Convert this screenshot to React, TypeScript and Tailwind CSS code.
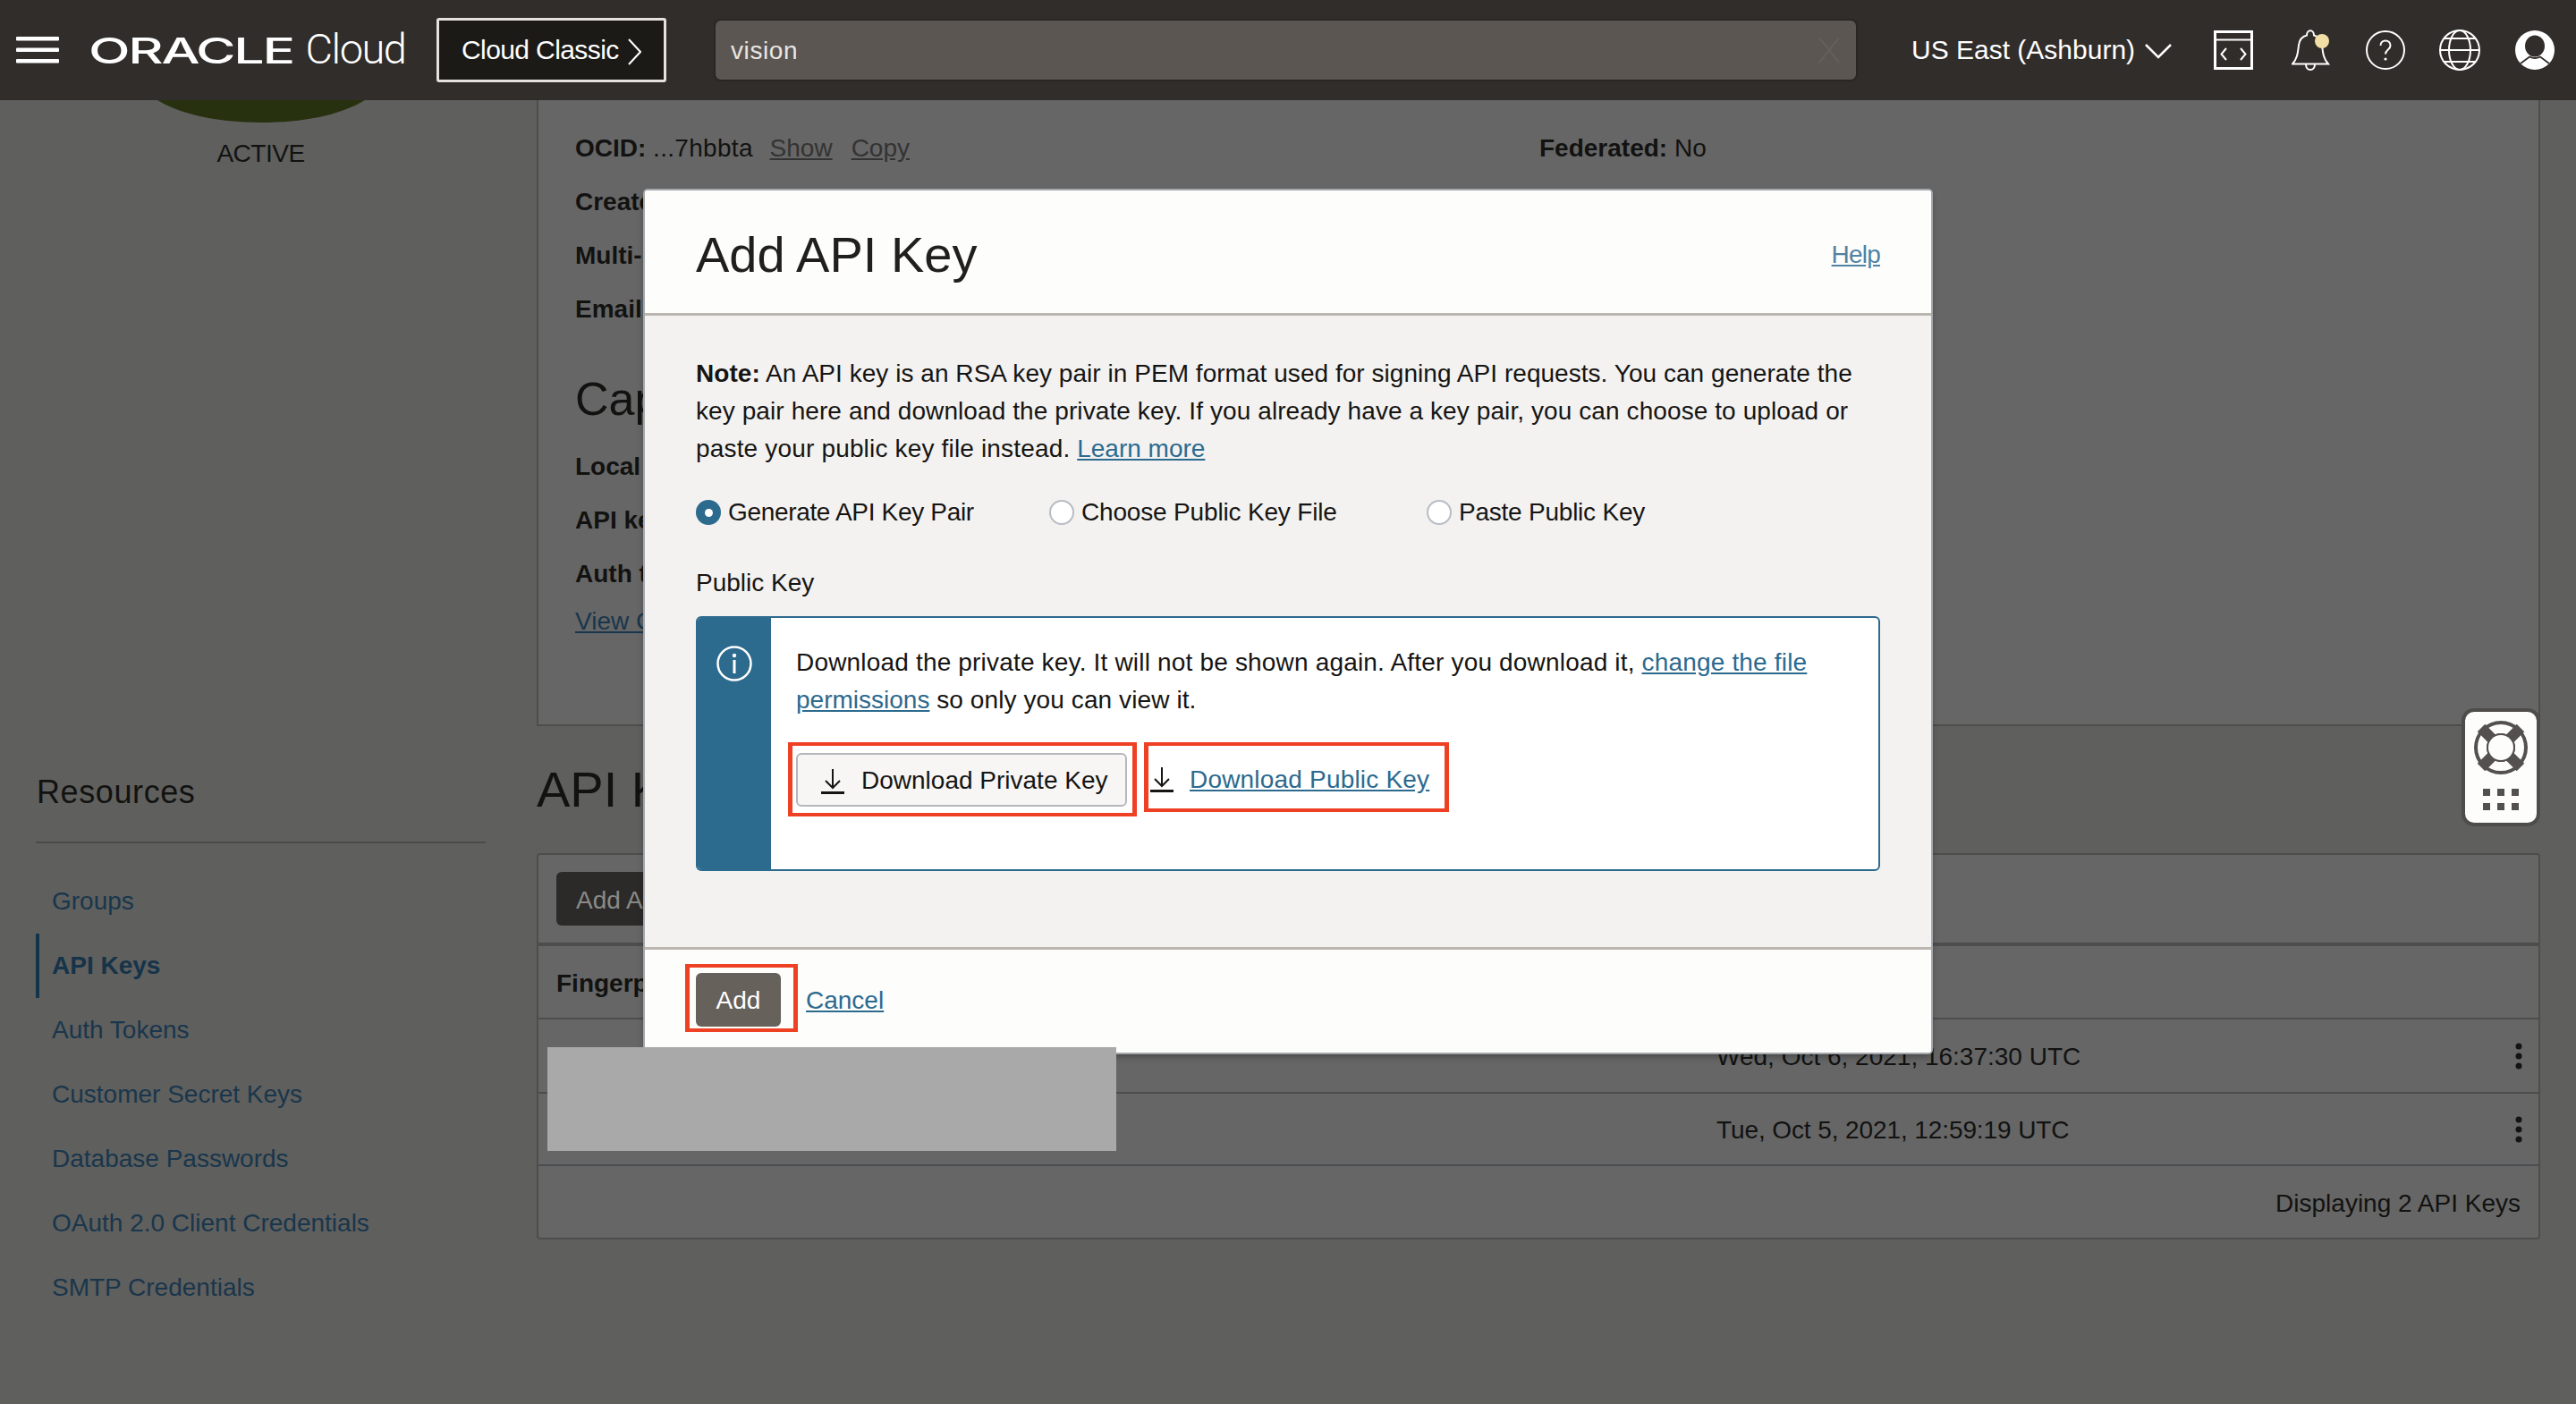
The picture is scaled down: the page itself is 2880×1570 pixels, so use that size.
import React from "react";

const Dl = ({ className = "" }: { className?: string }) => (
  <svg width="26" height="29" viewBox="0 0 26 29" className={className} fill="none" stroke="#161513">
    <path d="M13 1V22M5 14l8 8 8-8" strokeWidth="2" />
    <path d="M0 27.5H26" strokeWidth="3" />
  </svg>
);

const Radio = ({ on = false }: { on?: boolean }) =>
  on ? (
    <span className="flex h-[28px] w-[28px] items-center justify-center rounded-full bg-[#2c6a8e]">
      <span className="h-[9px] w-[9px] rounded-full bg-white" />
    </span>
  ) : (
    <span className="h-[28px] w-[28px] rounded-full border-2 border-[#b8bcc4] bg-white" />
  );

const navItems = ["Groups", "API Keys", "Auth Tokens", "Customer Secret Keys", "Database Passwords", "OAuth 2.0 Client Credentials", "SMTP Credentials"];

const Kebab = () => (
  <svg width="8" height="30" viewBox="0 0 8 30" fill="#141414">
    <circle cx="4" cy="4" r="3.5" />
    <circle cx="4" cy="15" r="3.5" />
    <circle cx="4" cy="26" r="3.5" />
  </svg>
);

export default function App() {
  return (
    <div className="relative h-[1570px] w-[2880px] overflow-hidden bg-[#5f5f5d] font-['Liberation_Sans',Arial,sans-serif] text-[28px] leading-[42px] text-[#121211]">
      {/* Header */}
      <header className="relative z-10 flex h-[112px] items-center bg-[#312d2a] pl-[18px] text-white">
        <svg width="48" height="30" viewBox="0 0 48 30" fill="#fff" className="-mt-[1px]">
          <rect width="48" height="4.5" rx="1" />
          <rect y="12.5" width="48" height="4.5" rx="1" />
          <rect y="25" width="48" height="4.5" rx="1" />
        </svg>
        <div className="ml-[33px] flex w-[353px] items-baseline whitespace-nowrap">
          <span className="origin-left scale-x-[1.52] font-['Inter'] text-[40px] font-medium leading-[50px] tracking-[-1.5px]">ORACLE</span>
          <span className="ml-[92px] font-['Roboto'] text-[47px] font-light leading-[50px] tracking-[-1.5px]">Cloud</span>
        </div>
        <div className="ml-[36px] flex h-[72px] w-[257px] items-center rounded-[3px] border-[3px] border-[#e4e2de] bg-[#1b1a16] pl-[25px] text-[30px] tracking-[-.6px]">
          Cloud Classic
          <svg width="15" height="30" viewBox="0 0 15 30" fill="none" stroke="#fff" strokeWidth="2" className="ml-[10px] mt-[3px]">
            <path d="M1 1l13 14L1 29" />
          </svg>
        </div>
        <div className="ml-[55px] flex h-[66px] w-[1275px] items-center justify-between rounded-[6px] bg-[#5b5652] pl-[17px] pr-[18px] text-[#e9e6e2] shadow-[0_0_0_2px_#292623]">
          <span className="pt-[2px] tracking-[.6px]">vision</span>
          <svg width="24" height="30" viewBox="0 0 24 30" stroke="#64605b" strokeWidth="2">
            <path d="M1 1l22 28M23 1L1 29" />
          </svg>
        </div>
        <span className="ml-[62px] whitespace-nowrap text-[30px]">US East (Ashburn)</span>
        <svg width="30" height="17" viewBox="0 0 30 17" fill="none" stroke="#fff" strokeWidth="2.5" className="ml-[11px] mt-[3px]">
          <path d="M1 1l14 14L29 1" />
        </svg>
        <svg width="44" height="44" viewBox="0 0 44 44" fill="none" stroke="#fff" className="ml-[47px]">
          <path d="M1.5 1.5h41v41h-41z" strokeWidth="3" />
          <path d="M2 10.5h40" strokeWidth="2" />
          <path d="M14 20l-5.500 6.500 5.500 6.500M30 20l5.500 6.500-5.500 6.500" strokeWidth="2" />
        </svg>
        <svg width="44" height="48" viewBox="0 0 44 48" fill="none" stroke="#fff" strokeWidth="2" className="ml-[43px]">
          <path d="M1 39.500c6-7 6-13 7-21 1-7 5-10 9-11 0-7 8-7 8 0 4 1 8 4 9 11 1 8 1 14 7 21z" />
          <path d="M16 40c0 8 10 8 10 0" />
          <circle cx="34" cy="14" r="8" fill="#f2dfa6" stroke="none" />
        </svg>
        <svg width="44" height="44" viewBox="0 0 44 44" fill="none" stroke="#fff" strokeWidth="2" className="ml-[39px]">
          <circle cx="22" cy="22" r="21" />
          <path d="M16.500 17c0-7.500 11-7.500 11 0 0 4.500-5.500 4.500-5.500 9.500" />
          <circle cx="22" cy="32" r="1.600" fill="#fff" stroke="none" />
        </svg>
        <svg width="46" height="46" viewBox="0 0 46 46" fill="none" stroke="#fff" strokeWidth="2" className="ml-[38px]">
          <circle cx="23" cy="23" r="22" />
          <ellipse cx="23" cy="23" rx="12" ry="22" />
          <path d="M5 10h36M1 23h44M5 36h36" />
        </svg>
        <svg width="44" height="44" viewBox="0 0 44 44" className="ml-[39px]">
          <circle cx="22" cy="22" r="22" fill="#fff" />
          <ellipse cx="22" cy="17.500" rx="11" ry="12" fill="#312d2a" />
          <path d="M6 37l10-7.500q6 3 12 0l10 7.500" stroke="#312d2a" strokeWidth="1.800" fill="none" />
        </svg>
      </header>

      <main className="flex">
        {/* Sidebar */}
        <aside className="flex w-[600px] shrink-0 flex-col pl-[40px] pr-[57px]">
          <div className="flex flex-col items-center">
            <svg width="232" height="25" viewBox="0 0 232 25" fill="#27310f" className="block">
              <path d="M0 0C28 17 70 25 116 25C162 25 204 17 232 0Z" />
            </svg>
            <div className="mt-[14px] tracking-[-.5px]">ACTIVE</div>
          </div>
          <h3 className="mt-[668px] h-[50px] pl-[1px] text-[36px] leading-[50px] tracking-[.6px]">Resources</h3>
          <div className="mt-[30px] h-[2px] bg-[#4a4a49]" />
          <nav className="mt-[29px]">
            {navItems.map((n) =>
              n === "API Keys" ? (
                <div key={n} className="flex h-[72px] items-center border-l-4 border-[#153349] pl-[14px] font-bold text-[#153349]">
                  {n}
                </div>
              ) : (
                <div key={n} className="flex h-[72px] items-center pl-[18px] text-[#19364c]">
                  {n}
                </div>
              )
            )}
          </nav>
        </aside>

        {/* Content */}
        <section className="w-[2240px] shrink-0">
          <div className="h-[700px] border-x-2 border-b-2 border-[#4d4d4c] bg-[#666666] pl-[41px] pt-[33px]">
            <div className="flex h-[60px]">
              <div className="w-[1078px]">
                <b>OCID:</b> <span className="tracking-[.3px]">...7hbbta</span> <span className="ml-[11px] text-[#333] underline">Show</span>
                <span className="ml-[21px] text-[#333] underline">Copy</span>
              </div>
              <div>
                <b>Federated:</b> No
              </div>
            </div>
            <div className="h-[60px] font-bold">Create</div>
            <div className="h-[60px] font-bold">Multi-</div>
            <div className="h-[42px] font-bold">Email:</div>
            <div className="mt-[49px] text-[52px] leading-[60px]">Cap</div>
            <div className="mt-[25px] h-[60px] font-bold">Local</div>
            <div className="h-[60px] font-bold">API ke</div>
            <div className="h-[53px] font-bold">Auth t</div>
            <div className="text-[#19364c] underline">View C</div>
          </div>

          <h2 className="mt-[39px] h-[62px] text-[56px] leading-[64px]">API K</h2>

          <div className="mt-[41px] h-[432px] rounded-[4px] border-2 border-[#4d4d4c] bg-[#666666]">
            <div className="h-[102px] border-b-4 border-[#4d4d4c] pl-[20px] pt-[19px]">
              <div className="flex h-[60px] w-[200px] items-center rounded-[6px] bg-[#2b2a28] pl-[22px] pt-[3px] text-[#8a8a88]">Add A</div>
            </div>
            <div className="flex h-[82px] items-center border-b-2 border-[#4d4d4c] pl-[20px] pt-[3px] font-bold">Fingerp</div>
            <div className="flex h-[83px] items-center justify-between border-b-2 border-[#4d4d4c] pl-[1317px] pr-[18px]">
              <span className="pt-[2px]">Wed, Oct 6, 2021, 16:37:30 UTC</span>
              <Kebab />
            </div>
            <div className="flex h-[81px] items-center justify-between border-b-2 border-[#4a4e52] pl-[1317px] pr-[18px]">
              <span className="pt-[2px] tracking-[-.1px]">Tue, Oct 5, 2021, 12:59:19 UTC</span>
              <Kebab />
            </div>
            <div className="flex h-[80px] items-center justify-end pr-[20px] pt-[3px]">Displaying 2 API Keys</div>
          </div>
        </section>
      </main>

      {/* Modal */}
      <div className="absolute left-[721px] top-[213px] z-20 flex h-[964px] w-[1438px] flex-col rounded-[3px] bg-[#f3f2f1] shadow-[0_0_0_2px_#a4a8ae,0_4px_8px_rgba(0,0,0,.35)]">
        <div className="flex h-[140px] shrink-0 items-center justify-between rounded-t-[3px] border-b-[3px] border-[#bcb6b0] bg-[#fdfdfb] pl-[57px] pr-[57px] pt-[6px]">
          <h1 className="text-[56px] leading-[64px] text-[#201f1e]">Add API Key</h1>
          <a className="tracking-[-.8px] text-[#4f82a3] underline">Help</a>
        </div>
        <div className="flex-1 px-[57px] pt-[44px] text-[#161513]">
          <p>
            <span className="tracking-[.04px]"><b>Note:</b> An API key is an RSA key pair in PEM format used for signing API requests. You can generate the</span>
            <br />
            <span className="tracking-[.09px]">key pair here and download the private key. If you already have a key pair, you can choose to upload or</span>
            <br />
            <span className="tracking-[.17px]">paste your public key file instead.</span> <a className="text-[#2c6a8e] underline">Learn more</a>
          </p>
          <div className="mt-[29px] flex h-[42px] items-center">
            <Radio on />
            <span className="ml-[8px] w-[359px] tracking-[-.33px]">Generate API Key Pair</span>
            <Radio />
            <span className="ml-[8px] w-[386px] tracking-[-.17px]">Choose Public Key File</span>
            <Radio />
            <span className="ml-[8px] tracking-[-.23px]">Paste Public Key</span>
          </div>
          <div className="mt-[37px]">Public Key</div>
          <div className="mt-[16px] flex h-[285px] w-[1324px] overflow-hidden rounded-[6px] border-2 border-[#2c6a8e] bg-white">
            <div className="flex w-[82px] shrink-0 justify-center bg-[#2c6a8e] pt-[31px]">
              <svg width="40" height="40" viewBox="0 0 40 40" fill="none" stroke="#fff">
                <circle cx="20" cy="20" r="18.500" strokeWidth="2.500" />
                <circle cx="20" cy="11" r="2.200" fill="#fff" stroke="none" />
                <path d="M20 16v15" strokeWidth="3" />
              </svg>
            </div>
            <div className="pl-[28px] pt-[29px]">
              <p>
                <span className="tracking-[.18px]">Download the private key. It will not be shown again. After you download it,</span>{" "}
                <a className="tracking-[.18px] text-[#2c6a8e] underline">change the file</a>
                <br />
                <a className="text-[#2c6a8e] underline">permissions</a> <span className="tracking-[.1px]">so only you can view it.</span>
              </p>
              <div className="mt-[38px] flex items-center">
                <div className="flex h-[60px] w-[370px] items-center rounded-[6px] border-2 border-[#b6b7bb] bg-[#f7f6f5] pl-[26px] pt-[2px]">
                  <Dl />
                  <span className="ml-[19px] whitespace-nowrap">Download Private Key</span>
                </div>
                <Dl className="ml-[26px] -mt-[1px]" />
                <a className="ml-[18px] whitespace-nowrap tracking-[.19px] text-[#2c6a8e] underline">Download Public Key</a>
              </div>
            </div>
          </div>
        </div>
        <div className="flex h-[118px] shrink-0 items-start rounded-b-[3px] border-t-[3px] border-[#bcb6b0] bg-[#fdfdfb] pl-[57px] pt-[26px]">
          <div className="flex h-[60px] w-[95px] items-center justify-center rounded-[6px] bg-[#67615c] pt-[2px] text-white">Add</div>
          <a className="ml-[28px] mt-[10px] text-[#2c6a8e] underline">Cancel</a>
        </div>
      </div>

      {/* Redaction patch */}
      <div className="absolute left-[612px] top-[1171px] z-30 h-[116px] w-[636px] bg-[#a9a9a9]" />

      {/* Annotation boxes */}
      <div className="absolute left-[881px] top-[830px] z-30 h-[83px] w-[390px] border-x-[5px] border-y-4 border-[#ee4023]" />
      <div className="absolute left-[1279px] top-[830px] z-30 h-[78px] w-[341px] border-x-[5px] border-y-4 border-[#ee4023]" />
      <div className="absolute left-[766px] top-[1078px] z-30 h-[76px] w-[126px] border-x-[5px] border-y-4 border-[#ee4023]" />

      {/* Help widget */}
      <div className="absolute left-[2752px] top-[792px] z-10 flex h-[132px] w-[88px] flex-col items-center rounded-[14px] border-4 border-[#4f4d4a] bg-[#fdfdfb] pt-[10px]">
        <svg width="60" height="60" viewBox="0 0 60 60">
          <circle cx="30" cy="30" r="30" fill="#53504d" />
          <circle cx="30" cy="30" r="21" fill="none" stroke="#fdfdfb" strokeWidth="10" />
          <path d="M8 8l44 44M52 8L8 52" stroke="#53504d" strokeWidth="12" />
          <circle cx="30" cy="30" r="16" fill="#53504d" />
          <circle cx="30" cy="30" r="14" fill="#fdfdfb" />
        </svg>
        <div className="mt-[16px] grid grid-cols-3 gap-[8px]">
          {[0, 1, 2, 3, 4, 5].map((i) => (
            <span key={i} className="h-[8px] w-[8px] bg-[#53504d]" />
          ))}
        </div>
      </div>
    </div>
  );
}
